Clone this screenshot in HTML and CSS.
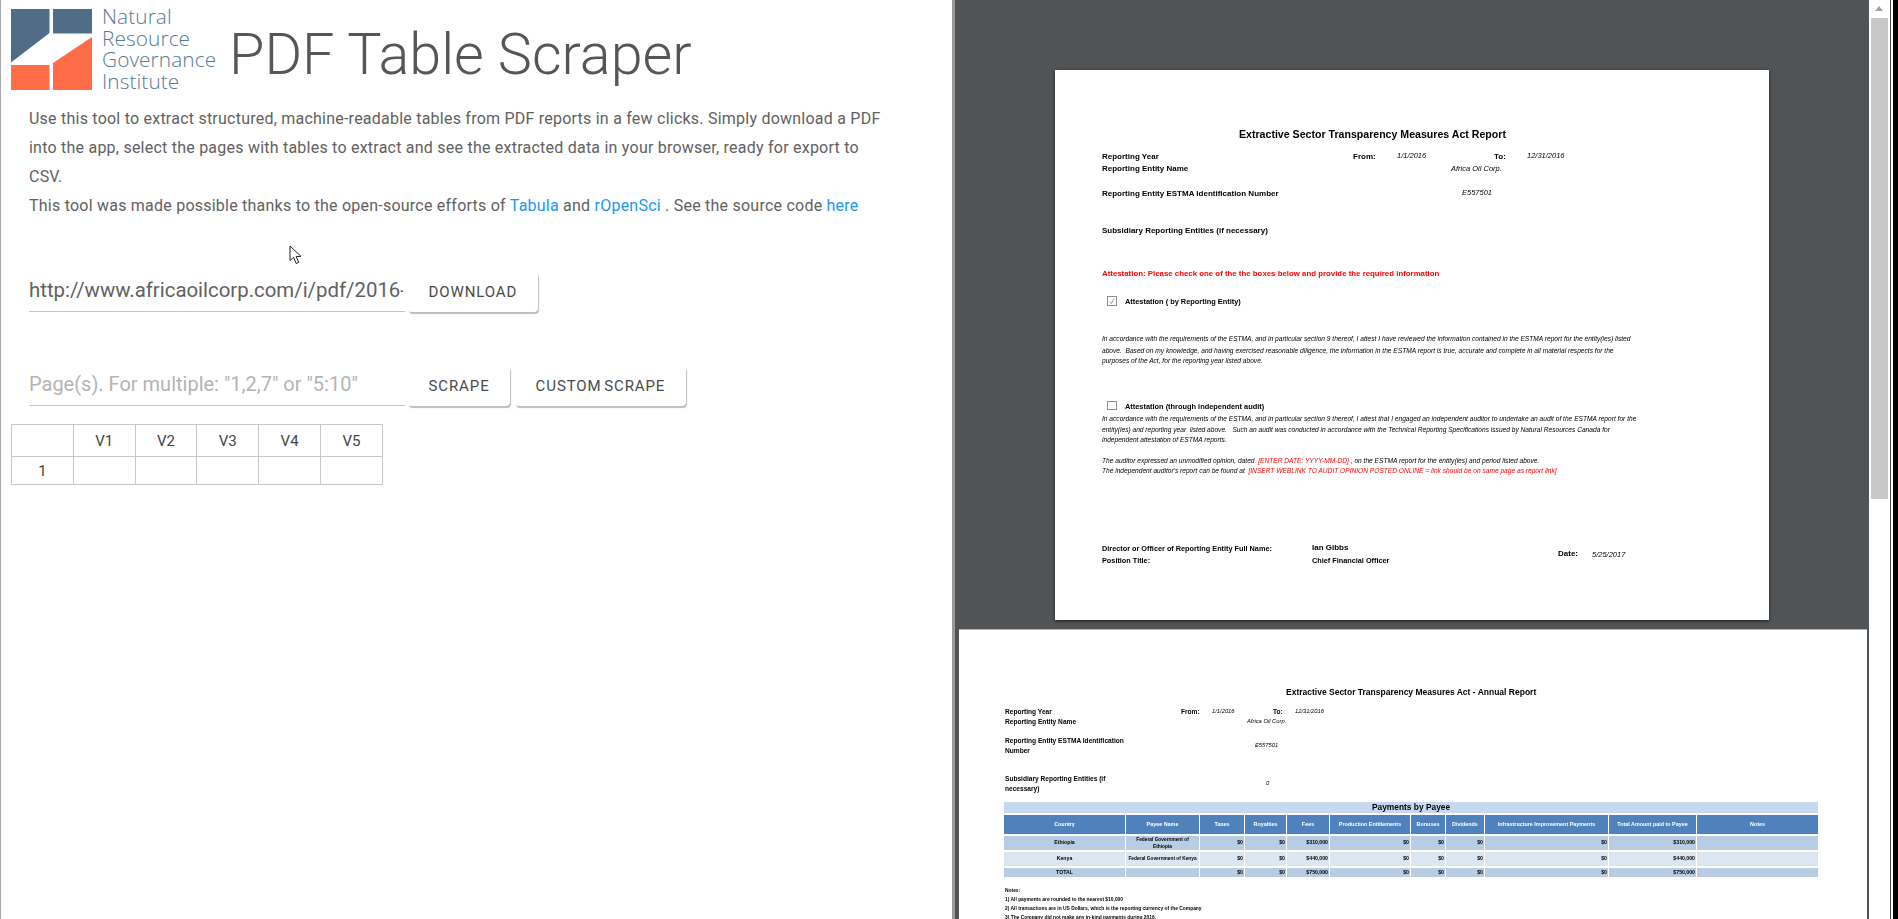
FILE: index.html
```html
<!DOCTYPE html>
<html lang="en">
<head>
<meta charset="utf-8">
<title>PDF Table Scraper</title>
<link rel="stylesheet" href="styles.css">
</head>
<body>
<main class="app">
  <section class="tool">
    <header class="head">
      <div class="logo">
        <svg class="logo-mark" width="82" height="82" viewBox="0 0 82 82">
          <polygon class="mark-blue" points="0,0 38.5,0 38.5,24 0,53.5"/>
          <rect class="mark-blue" x="42" y="0" width="39" height="24.5"/>
          <rect class="mark-orange" x="0" y="56" width="38.5" height="25"/>
          <polygon class="mark-orange" points="42,54 81,28 81,81 42,81"/>
        </svg>
        <div class="logo-text">Natural<br>Resource<br>Governance<br>Institute</div>
      </div>
      <h1 class="title">PDF Table Scraper</h1>
    </header>
    <div class="intro">
      <p>Use this tool to extract structured, machine-readable tables from PDF reports in a few clicks. Simply download a PDF into the app, select the pages with tables to extract and see the extracted data in your browser, ready for export to CSV.</p>
      <p>This tool was made possible thanks to the open-source efforts of <a href="#">Tabula</a> and <a href="#">rOpenSci</a> . See the source code <a href="#">here</a></p>
    </div>
    <div class="form-row first">
      <input class="field" type="text" value="http://www.africaoilcorp.com/i/pdf/2016-ESTMA-Report.pdf">
      <button class="btn" type="button">Download</button>
    </div>
    <div class="form-row second">
      <input class="field" type="text" placeholder="Page(s). For multiple: &quot;1,2,7&quot; or &quot;5:10&quot;">
      <button class="btn" type="button">Scrape</button>
      <button class="btn" type="button">Custom Scrape</button>
    </div>
    <table class="result">
      <thead>
        <tr><th></th><th>V1</th><th>V2</th><th>V3</th><th>V4</th><th>V5</th></tr>
      </thead>
      <tbody>
        <tr><td>1</td><td></td><td></td><td></td><td></td><td></td></tr>
      </tbody>
    </table>
    <svg class="cursor" width="14" height="20" viewBox="0 0 14 20">
      <path d="M1 1 L1 15.5 L4.6 12.4 L7.2 18.6 L9.8 17.4 L7.2 11.6 L12 11.4 Z"/>
    </svg>
  </section>

  <div class="divider"></div>

  <section class="viewer">
    <article class="pdf-page page-one">
      <div class="sheet">
        <span class="t title-1 p1a">Extractive Sector Transparency Measures Act Report</span>
        <span class="t b p1b">Reporting Year</span>
        <span class="t b p1c">From:</span>
        <span class="t i p1d">1/1/2016</span>
        <span class="t b p1e">To:</span>
        <span class="t i p1f">12/31/2016</span>
        <span class="t b p1g">Reporting Entity Name</span>
        <span class="t i p1h">Africa Oil Corp.</span>
        <span class="t b p1i">Reporting Entity ESTMA Identification Number</span>
        <span class="t i p1j">E557501</span>
        <span class="t b p1k">Subsidiary Reporting Entities (if necessary)</span>
        <span class="t b red p1l">Attestation: Please check one of the the boxes below and provide the required information</span>
        <svg class="box p1m" width="10" height="10" viewBox="0 0 10 10"><rect x="0.5" y="0.5" width="9" height="9"/><path d="M3 5.5 L4.4 7.6 L7 2.6"/></svg>
        <span class="t b sm p1n">Attestation ( by Reporting Entity)</span>
        <span class="t i fine p1o">In accordance with the requirements of the ESTMA, and in particular section 9 thereof, I attest I have reviewed the information contained in the ESTMA report for the entity(ies) listed</span>
        <span class="t i fine p1p">above.  Based on my knowledge, and having exercised reasonable diligence, the information in the ESTMA report is true, accurate and complete in all material respects for the</span>
        <span class="t i fine p1q">purposes of the Act, for the reporting year listed above.</span>
        <svg class="box p1r" width="10" height="9" viewBox="0 0 10 9"><rect x="0.5" y="0.5" width="9" height="8"/></svg>
        <span class="t b sm p1s">Attestation (through independent audit)</span>
        <span class="t i fine p1t">In accordance with the requirements of the ESTMA, and in particular section 9 thereof, I attest that I engaged an independent auditor to undertake an audit of the ESTMA report for the</span>
        <span class="t i fine p1u">entity(ies) and reporting year  listed above.   Such an audit was conducted in accordance with the Technical Reporting Specifications issued by Natural Resources Canada for</span>
        <span class="t i fine p1v">independent attestation of ESTMA reports.</span>
        <span class="t i fine p1w">The auditor expressed an unmodified opinion, dated  <em class="red">[ENTER DATE: YYYY-MM-DD]</em> , on the ESTMA report for the entity(ies) and period listed above.</span>
        <span class="t i fine p1x">The independent auditor's report can be found at  <em class="red">[INSERT WEBLINK TO AUDIT OPINION POSTED ONLINE = link should be on same page as report link]</em></span>
        <span class="t b tight p1y">Director or Officer of Reporting Entity Full Name:</span>
        <span class="t b p1z">Ian Gibbs</span>
        <span class="t b tight p1aa">Position Title:</span>
        <span class="t b tight p1ab">Chief Financial Officer</span>
        <span class="t b p1ac">Date:</span>
        <span class="t i p1ad">5/25/2017</span>
      </div>
    </article>
    <article class="pdf-page page-two">
      <div class="sheet">
        <span class="t title-2 p2a">Extractive Sector Transparency Measures Act - Annual Report</span>
        <span class="t b v p2b">Reporting Year</span>
        <span class="t b v p2c">From:</span>
        <span class="t i v p2d">1/1/2016</span>
        <span class="t b v p2e">To:</span>
        <span class="t i v p2f">12/31/2016</span>
        <span class="t b v p2g">Reporting Entity Name</span>
        <span class="t i v p2h">Africa Oil Corp.</span>
        <span class="t b v p2i">Reporting Entity ESTMA Identification</span>
        <span class="t b v p2j">Number</span>
        <span class="t i v p2k">E557501</span>
        <span class="t b v p2l">Subsidiary Reporting Entities (if</span>
        <span class="t b v p2m">necessary)</span>
        <span class="t i v p2n">0</span>
        <div class="payments">
          <div class="pay-band">Payments by Payee</div>
          <div class="pay-h">Country</div><div class="pay-h">Payee Name</div><div class="pay-h">Taxes</div><div class="pay-h">Royalties</div><div class="pay-h">Fees</div><div class="pay-h">Production Entitlements</div><div class="pay-h">Bonuses</div><div class="pay-h">Dividends</div><div class="pay-h">Infrastructure Improvement Payments</div><div class="pay-h">Total Amount paid to Payee</div><div class="pay-h">Notes</div>
          <div class="pay-c dark">Ethiopia</div><div class="pay-c payee dark"><span>Federal Government of<br>Ethiopia</span></div><div class="pay-n dark">$0</div><div class="pay-n dark">$0</div><div class="pay-n dark">$310,000</div><div class="pay-n dark">$0</div><div class="pay-n dark">$0</div><div class="pay-n dark">$0</div><div class="pay-n dark">$0</div><div class="pay-n dark">$310,000</div><div class="pay-n dark"></div>
          <div class="pay-c light">Kenya</div><div class="pay-c payee light">Federal Government of Kenya</div><div class="pay-n light">$0</div><div class="pay-n light">$0</div><div class="pay-n light">$440,000</div><div class="pay-n light">$0</div><div class="pay-n light">$0</div><div class="pay-n light">$0</div><div class="pay-n light">$0</div><div class="pay-n light">$440,000</div><div class="pay-n light"></div>
          <div class="pay-c dark">TOTAL</div><div class="pay-c dark"></div><div class="pay-n dark">$0</div><div class="pay-n dark">$0</div><div class="pay-n dark">$750,000</div><div class="pay-n dark">$0</div><div class="pay-n dark">$0</div><div class="pay-n dark">$0</div><div class="pay-n dark">$0</div><div class="pay-n dark">$750,000</div><div class="pay-n dark"></div>
        </div>
        <div class="notes">
          <p>Notes:</p>
          <p>1) All payments are rounded to the nearest $10,000</p>
          <p>2) All transactions are in US Dollars, which is the reporting currency of the Company</p>
          <p>3) The Company did not make any in-kind payments during 2016.</p>
        </div>
      </div>
    </article>
  </section>

  <aside class="scrollbar">
    <div class="arrow"></div>
    <div class="thumb"></div>
  </aside>
  <div class="frame-edge"></div>
</main>
</body>
</html>
```

FILE: styles.css
```css
* { box-sizing: border-box; }
html, body { margin: 0; height: 100%; overflow: hidden; background: #fff; }
body { font-family: Roboto, "Liberation Sans", sans-serif; color: #5a5a5a; }

.app { display: flex; height: 919px; width: 1898px; }

/* Left tool panel */
.tool { position: relative; flex: 0 0 952px; border-left: 1px solid #a9a9a9; background: #fff; }
.head { display: flex; align-items: flex-start; padding: 9px 0 0 10px; height: 102px; }
.logo { display: flex; gap: 9px; width: 218px; flex: none; }
.logo-mark { display: block; flex: none; }
.mark-blue { fill: #4f6d87; }
.mark-orange { fill: #ff6c48; }
.logo-text { font-family: "Open Sans", sans-serif; font-weight: 300; font-size: 20.8px; line-height: 21.6px; letter-spacing: 0.1px; color: #567a95; margin-top: -3px; white-space: nowrap; }
.title { margin: 14px 0 0 0; font-family: Roboto, sans-serif; font-weight: 300; font-size: 57.5px; line-height: 64px; color: #545759; white-space: nowrap; }

.intro { padding: 2px 0 0 28px; width: 890px; font-size: 16px; line-height: 29px; color: #616161; letter-spacing: 0.23px; }
.intro p { margin: 0; }
.intro a { color: #2196f3; text-decoration: none; }

.form-row { display: flex; align-items: flex-start; margin-left: 28px; gap: 3px; height: 42px; }
.form-row.first { margin-top: 52px; }
.form-row.second { margin-top: 52px; }
.field { width: 376px; height: 40px; border: 0; border-bottom: 1px solid #c4c4c4; outline: 0; padding: 0 2px 4px 0; background: transparent; font-family: Roboto, sans-serif; font-size: 20.4px; color: #616161; }
.field::placeholder { color: #b4b4b4; opacity: 1; font-size: 20px; }
.btn { height: 40px; padding: 0 20.5px; border: 0; border-radius: 4px; background: #fff; box-shadow: 1px 2px 1px #bdbdbd; font-family: Roboto, sans-serif; font-size: 15px; letter-spacing: 0.9px; word-spacing: -2px; text-transform: uppercase; color: #4a4a4a; }
.btn + .btn { margin-left: 2px; }

.result { margin: 16px 0 0 10px; border-collapse: collapse; font-size: 15px; color: #444; }
.result th, .result td { border: 1px solid #c8c8c8; width: 61.8px; padding: 0; text-align: center; font-weight: 400; }
.result th { height: 32px; }
.result td { height: 28px; }

.cursor { position: absolute; left: 288px; top: 245px; }
.cursor path { fill: #fff; stroke: #222; stroke-width: 1; }

.divider { flex: 0 0 3px; background: #999; }

/* PDF viewer */
.viewer { flex: 0 0 914px; background: #505457; overflow: hidden; display: flex; flex-direction: column; }
.pdf-page { position: relative; flex: none; background: #fff; }
.page-one { width: 714px; height: 550px; margin: 70px 0 0 100px; box-shadow: 0 1px 3px #1f1f1f; }
.page-two { width: 908px; height: 300px; margin: 10px 0 0 4px; box-shadow: 0 -1px 0 #aeb4ba; }
.sheet { position: absolute; inset: 0; filter: blur(0.35px); font-family: "Liberation Sans", Arial, sans-serif; color: #000; }

/* Text placed on the PDF sheet */
.t { position: absolute; white-space: pre; line-height: 10px; font-size: 8px; }
.b { font-weight: 700; }
.i { font-style: italic; font-size: 7.5px; }
.sm { font-size: 7.4px; }
.tight { font-size: 7.3px; }
.fine { font-size: 6.62px; }
.red { color: #f00; }
.red.t { font-size: 7.85px; }
.title-1 { font-weight: 700; font-size: 10.6px; }
.title-2 { font-weight: 700; font-size: 8.5px; }
.v { font-size: 6.6px; }
.i.v { font-size: 5.8px; }
.box { position: absolute; }
.box rect { fill: #fff; stroke: #8d8d8d; }
.box path { fill: none; stroke: #777; stroke-width: 0.7; }

.p1a { left: 184px; top: 59px; }
.p1b { left: 47px; top: 82px; }
.p1c { left: 298px; top: 82px; }
.p1d { left: 342px; top: 81px; }
.p1e { left: 439px; top: 82px; }
.p1f { left: 472px; top: 81px; }
.p1g { left: 47px; top: 94px; }
.p1h { left: 396px; top: 94px; }
.p1i { left: 47px; top: 119px; }
.p1j { left: 407px; top: 118px; }
.p1k { left: 47px; top: 156px; }
.p1l { left: 47px; top: 199px; }
.p1m { left: 52px; top: 226px; }
.p1n { left: 70px; top: 227px; }
.p1o { left: 47px; top: 264px; }
.p1p { left: 47px; top: 276px; }
.p1q { left: 47px; top: 286px; }
.p1r { left: 52px; top: 331px; }
.p1s { left: 70px; top: 332px; }
.p1t { left: 47px; top: 344px; }
.p1u { left: 47px; top: 355px; }
.p1v { left: 47px; top: 365px; }
.p1w { left: 47px; top: 386px; }
.p1x { left: 47px; top: 396px; }
.p1y { left: 47px; top: 474px; }
.p1z { left: 257px; top: 473px; }
.p1aa { left: 47px; top: 486px; }
.p1ab { left: 257px; top: 486px; }
.p1ac { left: 503px; top: 479px; }
.p1ad { left: 537px; top: 480px; }

.p2a { left: 327px; top: 57px; }
.p2b { left: 46px; top: 77px; }
.p2c { left: 222px; top: 77px; }
.p2d { left: 253px; top: 76px; }
.p2e { left: 314px; top: 77px; }
.p2f { left: 336px; top: 76px; }
.p2g { left: 46px; top: 87px; }
.p2h { left: 288px; top: 86px; }
.p2i { left: 46px; top: 106px; }
.p2j { left: 46px; top: 116px; }
.p2k { left: 296px; top: 110px; }
.p2l { left: 46px; top: 144px; }
.p2m { left: 46px; top: 154px; }
.p2n { left: 307px; top: 148px; }

/* Payments table on the second sheet */
.payments { position: absolute; left: 45px; top: 172px; display: grid; grid-template-columns: 121px 73px 44px 41px 42px 80px 34px 38px 123px 87px 121px; grid-template-rows: 11px 19px 14px 14px 8.5px; gap: 2px 1px; font-size: 5.4px; font-weight: 700; line-height: 7.5px; }
.pay-band { grid-column: 1 / -1; background: #c6d9f0; text-align: center; font-size: 8.4px; line-height: 11px; }
.pay-h { display: flex; align-items: center; justify-content: center; background: #4f81bd; color: #fff; white-space: nowrap; }
.pay-c { display: flex; align-items: center; justify-content: center; text-align: center; font-size: 5.2px; }
.pay-c.payee { font-size: 4.8px; }
.pay-n { display: flex; align-items: center; justify-content: flex-end; padding-right: 1px; font-size: 5.2px; }
.dark { background: #b8cce4; }
.light { background: #dce6f1; }

.notes { position: absolute; left: 46px; top: 256px; font-size: 4.9px; font-weight: 700; line-height: 9px; white-space: nowrap; }
.notes p { margin: 0; }

/* Viewer scrollbar and window edge */
.scrollbar { position: relative; flex: 0 0 22px; background: #fff; padding: 18px 2px 0; border-right: 1px solid #444; }
.arrow { position: absolute; left: 6px; top: 6px; width: 0; height: 0; border: 4.5px solid transparent; border-top: 0; border-bottom: 5px solid #a3a3a3; }
.thumb { width: 17px; height: 481px; background: #c8c8c8; }
.frame-edge { flex: 0 0 2px; background: #fff; }
.app::after { content: ""; flex: 0 0 5px; background: #000; }
```
